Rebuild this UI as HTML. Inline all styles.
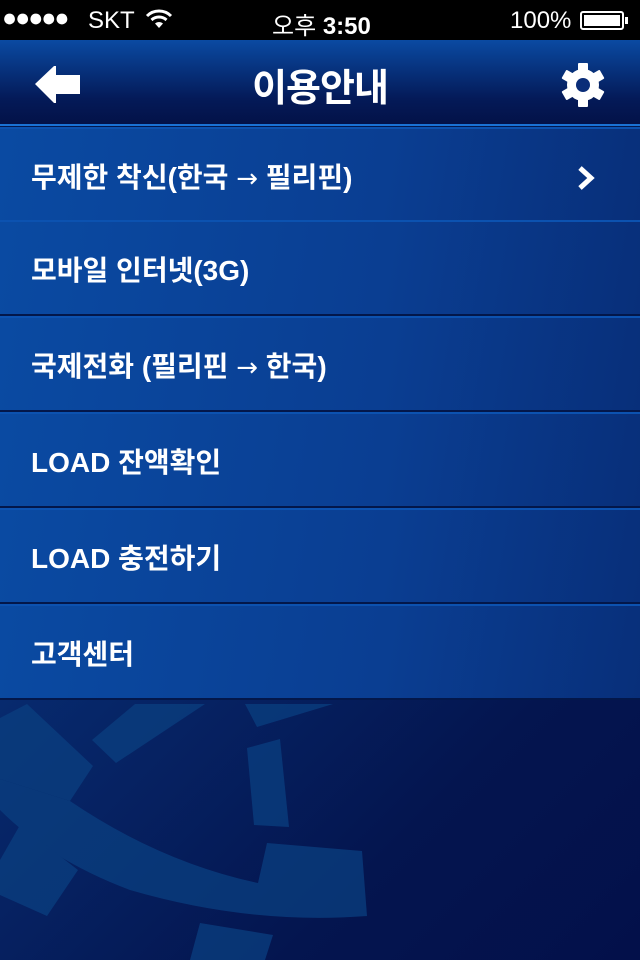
<!DOCTYPE html>
<html><head><meta charset="utf-8">
<style>
*{margin:0;padding:0;box-sizing:border-box}
body{width:640px;height:960px;overflow:hidden;position:relative;background:#000;font-family:"Liberation Sans","Noto Sans CJK KR",sans-serif}
#status{position:absolute;left:0;top:0;width:640px;height:40px;background:#000;color:#fff;font-size:24px}
#status span{position:absolute;top:7px}
#nav{position:absolute;top:40px;left:0;width:640px;height:84px;background:linear-gradient(#0a4aa2,#041a58 70%,#031248)}
#nav .t{position:absolute;left:0;width:640px;text-align:center;top:17px;color:#fff;font-size:38px;font-weight:bold;letter-spacing:-1px}
#l1{position:absolute;top:124px;height:2px;width:640px;background:#1a72d4}
#l2{position:absolute;top:126px;height:3px;width:640px;background:#04184e}
#bg{position:absolute;top:700px;left:0;width:640px;height:260px;background:linear-gradient(135deg,#072a6e,#04154f 60%,#03104a)}
.row{position:absolute;left:0;width:640px;height:96px;background:linear-gradient(100deg,#0a4aa2,#0a3e92 60%,#082f7a);border-bottom:2px solid #03174a;border-top:2px solid #0c52b0}
.row span{position:absolute;left:31px;top:27px;color:#fff;font-size:28px;font-weight:bold;letter-spacing:0}
.row i{font-style:normal;font-family:"DejaVu Sans",sans-serif;font-weight:normal;font-size:26px}
</style></head><body>
<div id="status">
<span style="left:2px;top:4px;font-size:25px;letter-spacing:-2px">●●●●●</span>
<span style="left:88px">SKT</span>
<svg style="position:absolute;left:145px;top:9px" width="28" height="20" viewBox="0 0 28 20"><path d="M2 7 A17 17 0 0 1 26 7" stroke="#fff" stroke-width="3" fill="none"/><path d="M6.5 11 A11 11 0 0 1 21.5 11" stroke="#fff" stroke-width="3" fill="none"/><path d="M14 19 L10 14.5 A6 6 0 0 1 18 14.5 Z" fill="#fff"/></svg>
<span style="left:272px;top:6px">오후 <b>3:50</b></span>
<span style="left:510px">100%</span>
<div style="position:absolute;left:580px;top:11px;width:44px;height:19px;border:2px solid #fff;border-radius:3px;padding:2px"><div style="width:100%;height:100%;background:#fff"></div></div>
<div style="position:absolute;left:625px;top:17px;width:3px;height:7px;background:#fff"></div>
</div>
<div id="nav">
<svg style="position:absolute;left:34px;top:25px" width="48" height="40" viewBox="0 0 48 40"><path d="M1 19 L20 1 L22 1 L22 10 L46 10 L46 29 L22 29 L22 38 L20 38 Z" fill="#fff"/></svg>
<div class="t">이용안내</div>
<svg style="position:absolute;left:560px;top:22px" width="46" height="46" viewBox="-23 -23 46 46"><g fill="#fff"><circle r="16"/><g id="tt"><rect x="-5" y="-22" width="10" height="9" rx="1"/></g><use href="#tt" transform="rotate(60)"/><use href="#tt" transform="rotate(120)"/><use href="#tt" transform="rotate(180)"/><use href="#tt" transform="rotate(240)"/><use href="#tt" transform="rotate(300)"/></g><circle r="7" fill="#0a2d78"/></svg>
</div>
<div id="l1"></div><div id="l2"></div>
<div id="bg">
<svg width="640" height="260" viewBox="0 700 640 260" style="position:absolute;left:0;top:0"><g fill="#0a3f80" opacity="0.75">
<path d="M0 718 L27 704 L93 766 L70 801 L0 779 Z"/>
<path d="M92 740 L135 704 L205 704 L116 763 Z"/>
<path d="M245 704 L333 704 L257 727 Z"/>
<path d="M247 748 L280 739 L289 827 L254 825 Z"/>
<path d="M0 779 L70 801 Q160 862 258 883 L267 843 L362 851 L367 916 Q250 925 130 890 Q50 860 0 810 Z"/>
<path d="M20 825 L78 870 L47 916 L0 895 L0 860 Z"/>
<path d="M200 923 L273 935 L265 960 L190 960 Z"/>
</g></svg>
</div>
<div class="row" style="top:127px"><span>무제한 착신(한국 <i>→</i> 필리핀)</span>
<svg style="position:absolute;left:576px;top:36px" width="20" height="26" viewBox="0 0 20 26"><path d="M4 3 L15 13 L4 23" stroke="#fff" stroke-width="5" fill="none"/></svg></div>
<div class="row" style="top:220px"><span>모바일 인터넷(3G)</span></div>
<div class="row" style="top:316px"><span>국제전화 (필리핀 <i>→</i> 한국)</span></div>
<div class="row" style="top:412px"><span>LOAD 잔액확인</span></div>
<div class="row" style="top:508px"><span>LOAD 충전하기</span></div>
<div class="row" style="top:604px"><span>고객센터</span></div>
</body></html>
